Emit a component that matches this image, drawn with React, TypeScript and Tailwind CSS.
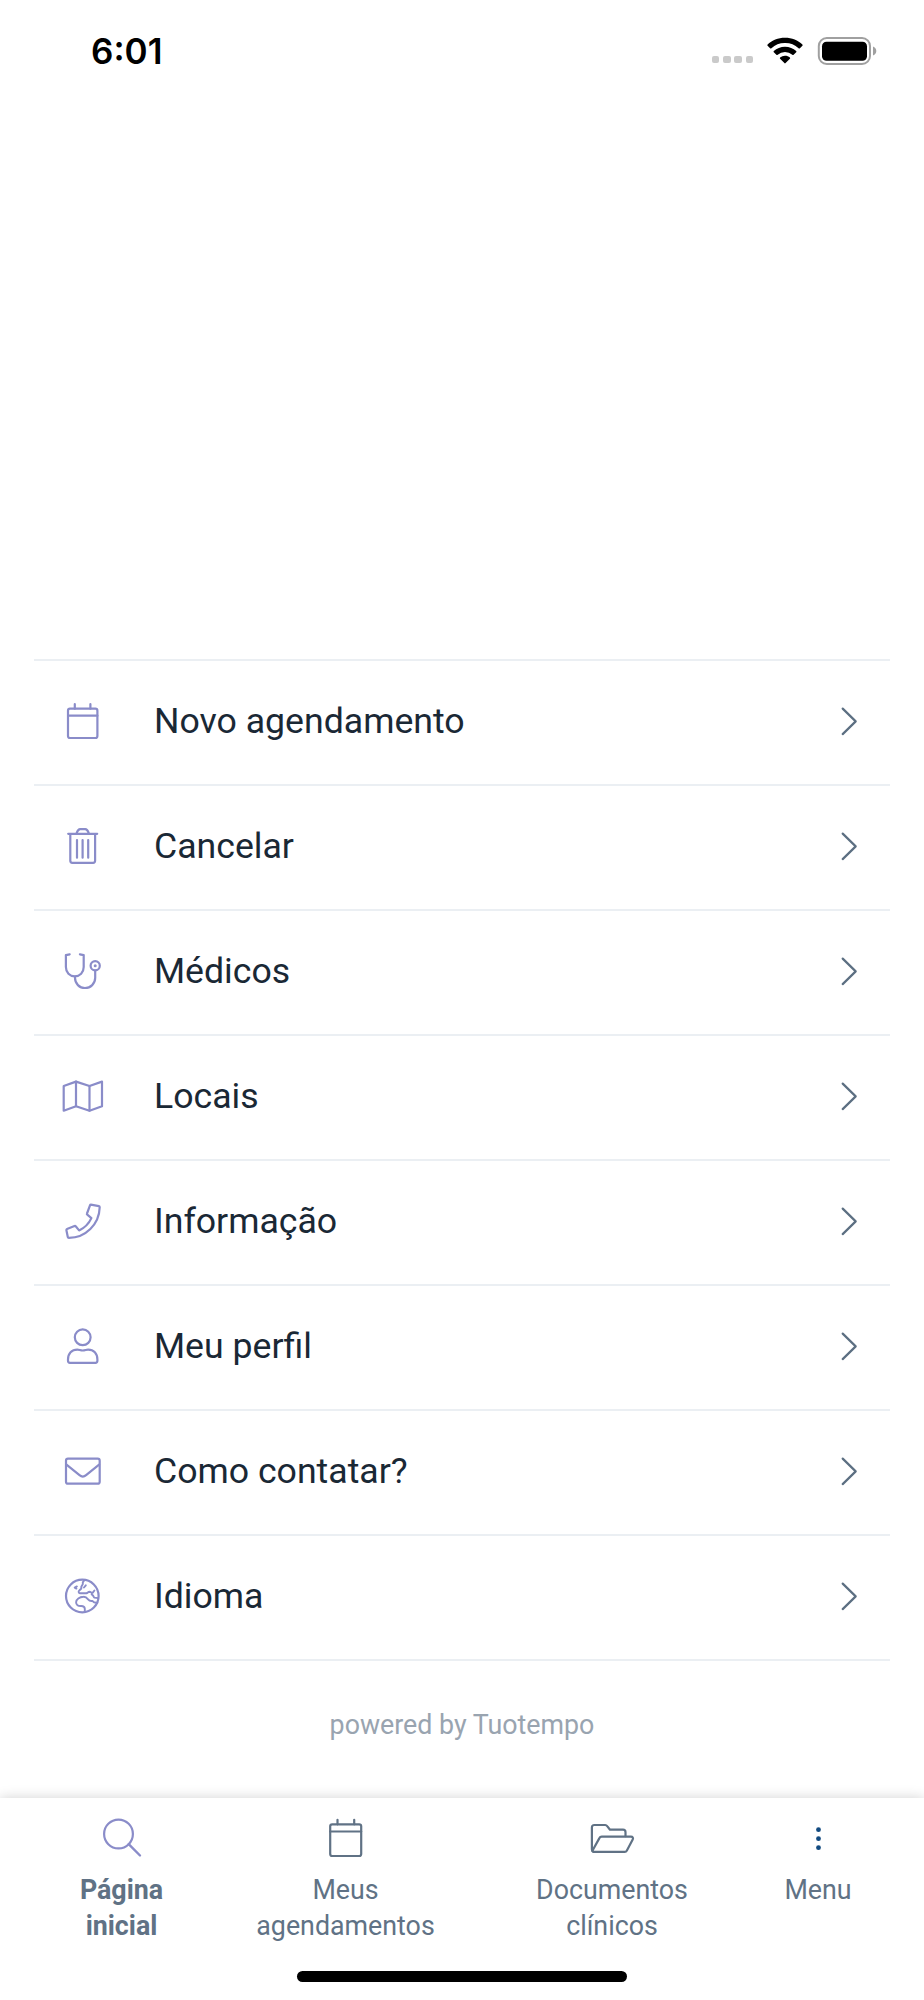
import type { ReactNode } from 'react';

function Icon({ children }: { children: ReactNode }) {
  return (
    <svg
      viewBox="0 0 48 48"
      className="w-12 h-12 shrink-0"
      fill="none"
      stroke="currentColor"
      strokeWidth="2.2"
      strokeLinecap="round"
      strokeLinejoin="round"
    >
      {children}
    </svg>
  );
}

const CalendarIcon = () => (
  <Icon>
    <rect x="10" y="10.7" width="29.4" height="29.3" rx="2" />
    <path d="M10 17.7h29.4M16.8 6.2v4.5M32.4 6.2v4.5" />
  </Icon>
);

const TrashIcon = () => (
  <Icon>
    <path d="M10.2 10.8h29M12.3 10.8v27a2 2 0 0 0 2 2h20.8a2 2 0 0 0 2-2v-27" />
    <path d="M18.5 10.5c1-2.8 2.2-4.3 3.6-4.3h5.2c1.4 0 2.6 1.5 3.6 4.3" />
    <path d="M19 17v17.7M24.6 17v17.7M30.2 17v17.7" />
  </Icon>
);

const StethoscopeIcon = () => (
  <Icon>
    <path d="M11.7 6.3l-3.8.8v12c0 5.6 3.8 9.3 8.9 9.3s8.9-3.7 8.9-9.3v-12l-3.8-.8" />
    <path d="M17 28.5v1.3c0 5.9 4.4 10.2 10 10.2s10.2-4.3 10.2-10.2v-7.2" />
    <circle cx="37.2" cy="17.7" r="4.6" />
    <circle cx="37.2" cy="17.7" r="1.5" fill="currentColor" stroke="none" />
  </Icon>
);

const MapIcon = () => (
  <Icon>
    <path d="M5.7 13v24.7L18 33.2l13.5 4.5L44 33.2V8.6l-12.5 4.4L18 8.6z" />
    <path d="M18 8.6v24.6M31.5 13v24.7" />
  </Icon>
);

const PhoneIcon = () => (
  <Icon>
    <path d="M32.9 6.7l8 1.5c.5.1.8.5.8 1C41.2 26.5 27.5 39.7 10.9 39.9c-.6 0-1-.3-1.1-.9L8.4 32.2c-.1-.5.1-.9.6-1.1l7.5-3.1c.5-.2.9-.1 1.2.3l3.4 4.1c5.6-2.6 9.7-6.7 12.3-12.3l-4.1-3.4c-.4-.3-.5-.8-.3-1.2l3-8.2c.2-.4.5-.7.9-.6z" />
  </Icon>
);

const UserIcon = () => (
  <Icon>
    <circle cx="24.7" cy="14.3" r="7.9" />
    <path d="M10 36.5c0-6 3.7-9.9 9.3-9.9 1.9 0 3.1.9 5.4.9s3.5-.9 5.4-.9c5.6 0 9.3 3.9 9.3 9.9v1.3a2 2 0 0 1-2 2H12a2 2 0 0 1-2-2z" />
  </Icon>
);

const MailIcon = () => (
  <Icon>
    <rect x="8" y="10.7" width="33.7" height="25" rx="2" />
    <path d="M8.5 16.7l13 10.5c2.3 1.9 4.3 1.9 6.6 0l13-10.5" />
  </Icon>
);

const GlobeIcon = () => (
  <Icon>
    <circle cx="24.3" cy="23" r="16.3" />
    <g strokeWidth="1.9">
      <path d="M18.9 13.4l-2.2 1.2 1.7 1" />
      <path d="M26.3 7.2c-1.4 1.3-1.9 2.5-1.5 3.9l-1.5 2.6c.5 1.5-.2 2.4-1.7 3.4-1.3 1.2-1.4 2.9.4 3.2h6.5c1.2-.2 1.6-1.5 3-1.5 1.5.1 1.7 1.3 3.3.8l1.6-2.1M27.8 12.3l-1.8 2.2M34.8 19.6c-1.4.5-1.6 1.9-.5 2.4 1.5.5.9 2 2.1 2.6l3.7.5" />
      <path d="M39.3 29.7c-2 .2-3.7-.3-5-1.8-1.5.3-3.1-.2-4.2-1.6-1.3-1.6-2.6-2.6-4.6-2.5-4 .1-7.4 2.4-7.4 5.4 0 2.7 2 3.9 4.8 3.8 2.3-.1 3.8.9 3.9 2.7v3.3" />
    </g>
  </Icon>
);

const SearchIcon = () => (
  <Icon>
    <circle cx="20.5" cy="20" r="14.4" />
    <path d="M30.7 30.2l11.3 11.3" strokeWidth="2.4" />
  </Icon>
);

const CalendarNavIcon = () => (
  <Icon>
    <rect x="8.2" y="10.3" width="31" height="31.7" rx="2" />
    <path d="M8.2 17.5h31M15.5 5.8v4.5M32.2 5.8v4.5" />
  </Icon>
);

const FolderIcon = () => (
  <Icon>
    <path d="M4.4 36.900c-.5-.5-.5-1-.5-1.600V13.500a2.500 2.500 0 0 1 2.500-2.500h10.800c1 0 1.500.4 2 1.100l2.800 3.600h13a2.500 2.500 0 0 1 2.500 2.500v4" />
    <path d="M4.4 36.700l7-12.600c.5-1 1.200-1.500 2.300-1.500h29.200c1.800 0 2.600 1.500 1.800 3l-5.800 10.800c-.5 1-1.100 1.500-2.200 1.500H6c-1 0-1.700-.5-1.600-1.200z" />
  </Icon>
);

const DotsIcon = () => (
  <svg viewBox="0 0 48 48" className="w-12 h-12 shrink-0" fill="#124a80">
    <circle cx="24.5" cy="15.7" r="2.4" />
    <circle cx="24.5" cy="24.7" r="2.4" />
    <circle cx="24.5" cy="33.7" r="2.4" />
  </svg>
);

const menuItems = [
  { label: 'Novo agendamento', icon: CalendarIcon },
  { label: 'Cancelar', icon: TrashIcon },
  { label: 'Médicos', icon: StethoscopeIcon },
  { label: 'Locais', icon: MapIcon },
  { label: 'Informação', icon: PhoneIcon },
  { label: 'Meu perfil', icon: UserIcon },
  { label: 'Como contatar?', icon: MailIcon },
  { label: 'Idioma', icon: GlobeIcon },
];

const tabs = [
  { lines: ['Página', 'inicial'], icon: SearchIcon, width: 'w-[225px]', active: true },
  { lines: ['Meus', 'agendamentos'], icon: CalendarNavIcon, width: 'w-[223px]' },
  { lines: ['Documentos', 'clínicos'], icon: FolderIcon, width: 'w-[310px]' },
  { lines: ['Menu'], icon: DotsIcon, width: 'w-[102px]' },
];

function StatusBar() {
  return (
    <header className="flex h-[101px] items-center justify-between pl-[91px] pr-[47px]">
      <span className="mt-px font-['Inter',sans-serif] text-[35px] font-semibold leading-none text-black">
        6:01
      </span>
      <div className="flex items-center">
        <div className="mr-[14px] mt-[18px] flex gap-[3.7px]">
          {[0, 1, 2, 3].map(i => (
            <span key={i} className="h-[7.5px] w-[7.5px] rounded-[2px] bg-[#cacaca]" />
          ))}
        </div>
        <svg viewBox="0 0 36 28" className="h-7 w-9">
          <path d="M18 .7c6.9 0 13.1 2.6 17.4 6.8.4.4.4.9 0 1.3l-2.5 2.4c-.3.4-.9.4-1.3 0A19.5 19.5 0 0 0 18 6 19.5 19.5 0 0 0 4.4 11.2c-.4.4-1 .4-1.3 0L.6 8.8c-.4-.4-.4-.9 0-1.3C4.9 3.3 11.1.7 18 .7z" />
          <path d="M18 9.8c4.4 0 8.3 1.6 11.2 4.2.4.4.4.9 0 1.3l-2.6 2.5c-.3.3-.9.3-1.3 0a10.9 10.9 0 0 0-14.6 0c-.4.3-1 .3-1.3 0l-2.6-2.5c-.4-.4-.4-.9 0-1.3C9.7 11.4 13.6 9.8 18 9.8z" />
          <path d="M18 18.8c1.9 0 3.6.6 4.9 1.7.4.4.4.9 0 1.3l-4.3 4.3c-.4.4-.9.4-1.2 0l-4.3-4.3c-.4-.4-.4-.9 0-1.3a7.7 7.7 0 0 1 4.900-1.700z" />
        </svg>
        <svg viewBox="0 0 60 28" className="ml-[14px] h-7 w-[60px]">
          <rect x="1.8" y="1" width="51.2" height="26" rx="8" fill="none" stroke="#a0a0a0" strokeWidth="2" />
          <rect x="5" y="4.700" width="45" height="19" rx="4.500" />
          <path d="M56 9.5c2 .7 3.3 2.5 3.3 4.5s-1.3 3.8-3.3 4.5z" fill="#a0a0a0" />
        </svg>
      </div>
    </header>
  );
}

export default function App() {
  return (
    <div className="flex h-[2000px] w-[924px] flex-col overflow-hidden bg-white font-['Roboto',sans-serif]">
      <StatusBar />

      <main className="flex flex-1 flex-col px-[34px] pt-[558px]">
        <ul className="border-t-2 border-[#ebeff3]">
          {menuItems.map(({ label, icon: RowIcon }) => (
            <li
              key={label}
              className="flex h-[125px] items-center border-b-2 border-[#ebeff3] pb-px pl-6 pr-8 text-[#8a8cc9]"
            >
              <RowIcon />
              <span className="ml-12 flex-1 text-[35.65px] leading-none text-[#1a2835]">{label}</span>
              <svg
                viewBox="0 0 18 30"
                className="h-[30px] w-[18px] text-[#5c6f82]"
                fill="none"
                stroke="currentColor"
                strokeWidth="2.2"
                strokeLinecap="round"
                strokeLinejoin="round"
              >
                <path d="M2.7 1.6l13 12.8-13 12.7" />
              </svg>
            </li>
          ))}
        </ul>
        <p className="mt-[46px] text-center text-[26.8px] leading-9 text-[#99a4b0]">powered by Tuotempo</p>
      </main>

      <footer className="flex h-[202px] flex-col items-center bg-white shadow-[0_0_12px_rgba(0,0,0,0.18)]">
        <nav className="flex w-full pl-[9px] pt-4 text-[#607285]">
          {tabs.map(({ lines, icon: TabIcon, width, active }) => (
            <div key={lines[0]} className={`flex flex-col items-center ${width}`}>
              <span className={active ? 'text-[#8a8cc9]' : 'text-[#607285]'}>
                <TabIcon />
              </span>
              <span className={`mt-[10px] text-center text-[26.8px] leading-9 ${active ? 'font-bold' : ''}`}>
                {lines.map(line => (
                  <span key={line} className="block">{line}</span>
                ))}
              </span>
            </div>
          ))}
        </nav>
        <div className="mb-[18px] mt-auto h-[11px] w-[330px] rounded-full bg-black" />
      </footer>
    </div>
  );
}
